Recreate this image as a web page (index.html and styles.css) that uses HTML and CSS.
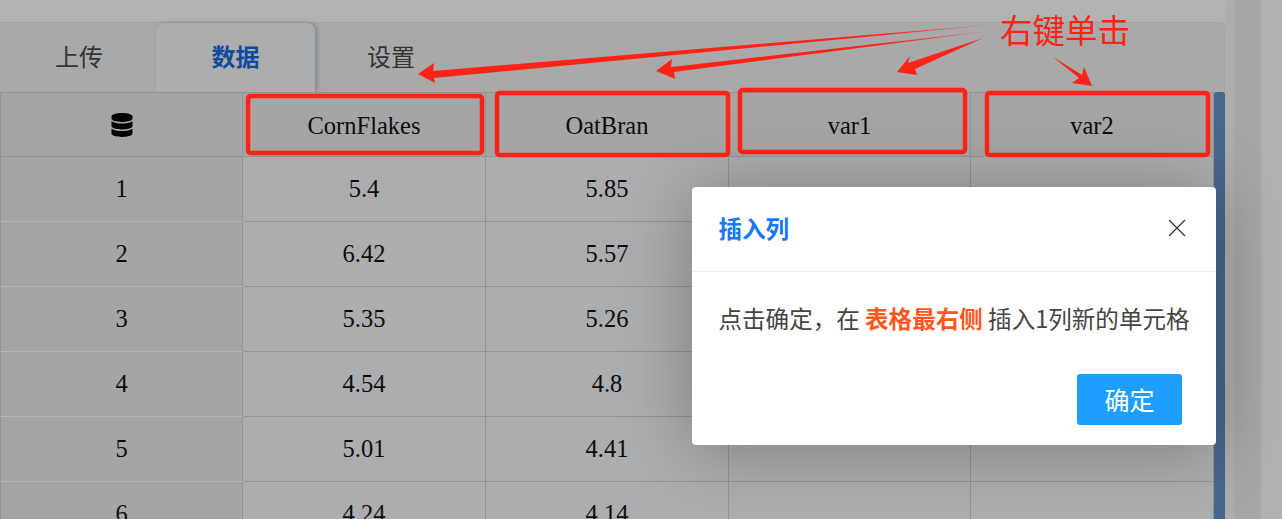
FILE: index.html
```html
<!DOCTYPE html>
<html lang="zh">
<head>
<meta charset="utf-8">
<title>插入列</title>
<link rel="stylesheet" href="styles.css">
</head>
<body>
<div class="app">
  <main class="main">
    <section class="card">
      <nav class="tabs">
        <div class="tab tab-upload">上传</div>
        <div class="tab tab-data">数据</div>
        <div class="tab tab-settings">设置</div>
      </nav>
      <div class="table-wrap">
        <table class="sheet">
          <colgroup><col class="c1"><col class="c2"><col class="c3"><col class="c4"><col class="c5"></colgroup>
          <thead>
            <tr>
              <th class="idx"><svg class="db" viewBox="0 0 448 512" aria-hidden="true"><path d="M448 73.12v45.75C448 159.1 347.7 192 224 192S0 159.1 0 118.9V73.12C0 32.88 100.3 0 224 0S448 32.88 448 73.12zM448 176v102.9C448 319.1 347.7 352 224 352S0 319.1 0 278.9V176c48.12 33.12 136.2 48.6 224 48.6S399.9 209.1 448 176zM448 336v102.9C448 479.1 347.7 512 224 512S0 479.1 0 438.9V336c48.12 33.12 136.2 48.6 224 48.6S399.9 369.1 448 336z"/></svg></th>
              <th>CornFlakes</th><th>OatBran</th><th>var1</th><th>var2</th>
            </tr>
          </thead>
          <tbody>
            <tr><td class="idx">1</td><td>5.4</td><td>5.85</td><td></td><td></td></tr>
            <tr><td class="idx">2</td><td>6.42</td><td>5.57</td><td></td><td></td></tr>
            <tr><td class="idx">3</td><td>5.35</td><td>5.26</td><td></td><td></td></tr>
            <tr><td class="idx">4</td><td>4.54</td><td>4.8</td><td></td><td></td></tr>
            <tr><td class="idx">5</td><td>5.01</td><td>4.41</td><td></td><td></td></tr>
            <tr><td class="idx">6</td><td>4.24</td><td>4.14</td><td></td><td></td></tr>
          </tbody>
        </table>
        <div class="scrollbar"></div>
      </div>
    </section>
  </main>
  <div class="strip-a"></div>
  <div class="strip-b"></div>
  <div class="strip-c"></div>
</div>

<svg class="notes" viewBox="0 0 1282 519" aria-hidden="true">
  <defs>
    <linearGradient id="tail" gradientUnits="userSpaceOnUse" x1="880" y1="0" x2="1000" y2="0">
      <stop offset="0" stop-color="#ff2316"/>
      <stop offset="1" stop-color="#ff2316" stop-opacity=".35"/>
    </linearGradient>
  </defs>
  <g class="note-fade">
    <polygon points="418,74 434,63 433,71 1000,24 434,78 435,83"/>
    <polygon points="656,71 672,59 671,67 990,31 674,72 675,79"/>
  </g>
  <g class="note-fill">
    <polygon points="897,72 910,56 908,63 983,38 915,69 917,75"/>
    <polygon points="1053,57 1082,75 1084,67 1092,86 1072,83 1079,78"/>
  </g>
  <g class="note-box">
    <rect x="248" y="96" width="234" height="57" rx="2.5"/>
    <rect x="497" y="93" width="231" height="62" rx="2.5"/>
    <rect x="740" y="90" width="225" height="62" rx="2.5"/>
    <rect x="987" y="93" width="221" height="62" rx="2.5"/>
  </g>
</svg>
<div class="note-text">右键单击</div>

<div class="modal" role="dialog">
  <header class="modal-head">
    <h2 class="modal-title">插入列</h2>
    <svg class="close" viewBox="0 0 18 18" aria-hidden="true"><path d="M1 1L17 17M17 1L1 17"/></svg>
  </header>
  <div class="modal-body">点击确定，在 <strong class="hot">表格最右侧</strong> 插入1列新的单元格</div>
  <footer class="modal-foot"><button class="ok" type="button">确定</button></footer>
</div>
</body>
</html>
```
FILE: styles.css
```css
* { box-sizing: border-box; }
html, body { margin: 0; height: 519px; overflow: hidden; }
body {
  position: relative;
  background: #b1b1b1;
  font-family: "Noto Sans CJK SC", "Noto Sans", sans-serif;
}
.app { display: flex; height: 519px; overflow: hidden; }
.main { width: 1225px; padding-top: 22px; flex: none; background: linear-gradient(#b3b3b3, #adadad 90px); }
.card {
  width: 1225px;
  background: #a9a9a9;
  border-top: 1px solid #a3a3a3;
  border-right: 1px solid #a5a5a5;
  border-top-right-radius: 5px;
}
.tabs { display: flex; height: 69px; }
.tab {
  height: 69px;
  font-size: 24px;
  line-height: 65px;
  text-align: center;
  color: #333;
}
.tab-upload { width: 156px; padding-left: 2px; }
.tab-data {
  width: 159px;
  color: #104a9c;
  font-weight: 700;
  background: #adadad;
  border-radius: 8px 8px 0 0;
  box-shadow: 2px 0 4px rgba(90, 105, 125, .55);
}
.tab-settings { width: 152px; }
.table-wrap { display: flex; align-items: flex-start; }
.sheet {
  width: 1213px;
  flex: none;
  table-layout: fixed;
  border-collapse: collapse;
  font-family: "Liberation Serif", serif;
  font-size: 24.5px;
  color: #0c0c0c;
}
.c1 { width: 242px; }
.c2, .c3, .c5 { width: 243px; }
.c4 { width: 242px; }
.sheet th, .sheet td {
  border: 1px solid #939393;
  padding: 0;
  text-align: center;
  font-weight: 400;
}
.sheet th { height: 64px; padding-top: 2px; background: #a5a5a5; }
.sheet th.idx { padding-top: 0; }
.sheet td { height: 65px; background: #acadaf; }
.sheet td.idx { background: #a5a5a5; border-top-color: #b5b5b5; border-bottom-color: #b5b5b5; }
.db { width: 22px; height: 24px; display: block; margin: 0 auto; fill: #000; }
.scrollbar {
  width: 11px;
  height: 430px;
  background: #46688d;
  border-radius: 3px 3px 0 0;
  flex: none;
}
.strip-a { width: 9px; background: #adadad; flex: none; }
.strip-b { width: 27px; background: #a6a6a6; flex: none; }
.strip-c { flex: 1; background: #b1b1b1; }

.notes { position: absolute; left: 0; top: 0; width: 1282px; height: 519px; }
.note-fill { fill: #ff2316; }
.note-fade { fill: url(#tail); }
.note-box { fill: none; stroke: #ff2316; stroke-width: 4.5; }
.note-text {
  position: absolute;
  left: 1000px;
  top: 6px;
  font-size: 32.5px;
  line-height: 46px;
  color: #ff2316;
}

.modal {
  position: absolute;
  left: 692px;
  top: 187px;
  width: 524px;
  height: 258px;
  background: #fff;
  border-radius: 4px;
  box-shadow: 0 4px 70px rgba(0, 0, 0, .28);
}
.modal-head {
  display: flex;
  align-items: center;
  justify-content: space-between;
  height: 85px;
  padding: 0 30px 2px 26.5px;
  border-bottom: 1px solid #f0f0f0;
}
.modal-title { margin: 0; font-size: 23.5px; font-weight: 700; color: #1677ff; }
.close { width: 18px; height: 18px; fill: none; stroke: #333; stroke-width: 1.2; }
.modal-body {
  padding: 0 0 0 26.5px;
  height: 92px;
  line-height: 92px;
  font-size: 23.55px;
  white-space: nowrap;
  color: #444;
}
.hot { color: #ff5722; font-weight: 700; }
.modal-foot { display: flex; justify-content: flex-end; padding: 10px 34px 0 0; }
.ok {
  width: 105px;
  height: 51px;
  border: 0;
  padding: 0 0 2px;
  border-radius: 3px;
  background: #1e9fff;
  color: #fff;
  font-family: inherit;
  font-size: 25px;
}
```
